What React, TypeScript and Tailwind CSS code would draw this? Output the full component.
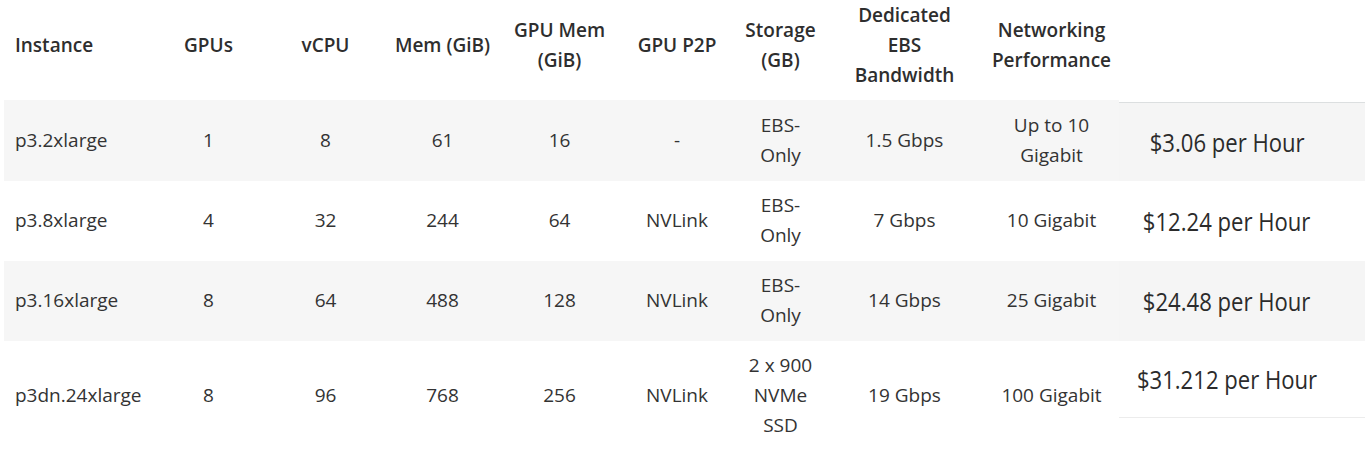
type Row = {
  instance: string;
  gpus: string;
  vcpu: string;
  mem: string;
  gpuMem: string;
  p2p: string;
  storage: string[];
  ebs: string;
  net: string[];
  price: string;
};

const ROWS: Row[] = [
  {
    instance: "p3.2xlarge",
    gpus: "1",
    vcpu: "8",
    mem: "61",
    gpuMem: "16",
    p2p: "-",
    storage: ["EBS-", "Only"],
    ebs: "1.5 Gbps",
    net: ["Up to 10", "Gigabit"],
    price: "$3.06 per Hour",
  },
  {
    instance: "p3.8xlarge",
    gpus: "4",
    vcpu: "32",
    mem: "244",
    gpuMem: "64",
    p2p: "NVLink",
    storage: ["EBS-", "Only"],
    ebs: "7 Gbps",
    net: ["10 Gigabit"],
    price: "$12.24 per Hour",
  },
  {
    instance: "p3.16xlarge",
    gpus: "8",
    vcpu: "64",
    mem: "488",
    gpuMem: "128",
    p2p: "NVLink",
    storage: ["EBS-", "Only"],
    ebs: "14 Gbps",
    net: ["25 Gigabit"],
    price: "$24.48 per Hour",
  },
  {
    instance: "p3dn.24xlarge",
    gpus: "8",
    vcpu: "96",
    mem: "768",
    gpuMem: "256",
    p2p: "NVLink",
    storage: ["2 x 900", "NVMe", "SSD"],
    ebs: "19 Gbps",
    net: ["100 Gigabit"],
    price: "$31.212 per Hour",
  },
];

const HEADERS: string[][] = [
  ["Instance"],
  ["GPUs"],
  ["vCPU"],
  ["Mem (GiB)"],
  ["GPU Mem", "(GiB)"],
  ["GPU P2P"],
  ["Storage", "(GB)"],
  ["Dedicated", "EBS", "Bandwidth"],
  ["Networking", "Performance"],
  [],
];

const WIDTHS = ["w-[146px]", "w-[117px]", "w-[117px]", "w-[117px]", "w-[117px]", "w-[118px]", "w-[89px]", "w-[159px]", "w-[135px]", "w-[246px]"];

function Lines({ lines }: { lines: string[] }) {
  return (
    <>
      {lines.map((l, i) => (
        <span key={i} className="block">
          {l}
        </span>
      ))}
    </>
  );
}

function PriceBox({ price, index }: { price: string; index: number }) {
  const grey = index % 2 === 0;
  return (
    <div
      className={
        "flex items-center justify-center pr-[30px] " +
        (grey ? "bg-[#f5f5f5] " : "bg-white ") +
        (index === 0 ? "mt-[2px] h-[79px] border-t border-[#dcdfe0] " : "") +
        (index === 1 || index === 2 ? "h-[80px] " : "") +
        (index === 3 ? "h-[77px] border-b border-[#ececec] " : "")
      }
    >
      <span className="inline-block origin-center scale-x-[0.85] whitespace-nowrap font-['Open_Sans',sans-serif] text-[26px] leading-none text-[#2b2b2b]">
        {price}
      </span>
    </div>
  );
}

export default function App() {
  return (
    <div className="h-[450px] w-[1365px] overflow-hidden bg-white font-['Open_Sans',sans-serif] text-[19px] text-[#333]">
      <table className="ml-[4px] w-[1361px] table-fixed border-collapse">
        <colgroup>
          {WIDTHS.map((w, i) => (
            <col key={i} className={w} />
          ))}
        </colgroup>
        <thead>
          <tr className="h-[100px]">
            {HEADERS.map((h, i) => (
              <th
                key={i}
                className={
                  "px-0 pt-0 pb-[10px] align-middle text-[19px] font-semibold leading-[30px] text-[#2e2e2e] " +
                  (i === 0 ? "pl-[11px] text-left" : "text-center")
                }
              >
                <Lines lines={h} />
              </th>
            ))}
          </tr>
        </thead>
        <tbody>
          {ROWS.map((r, i) => {
            const cells = [r.gpus, r.vcpu, r.mem, r.gpuMem, r.p2p];
            return (
              <tr key={r.instance} className={i % 2 === 0 ? "bg-[#f6f6f6]" : "bg-white"}>
                <td className="pt-[9px] pb-[11px] pl-[11px] text-left align-middle leading-[30px]">{r.instance}</td>
                {cells.map((c, j) => (
                  <td key={j} className="pt-[9px] pb-[11px] text-center align-middle leading-[30px]">
                    {c}
                  </td>
                ))}
                <td className="pt-[9px] pb-[11px] text-center align-middle leading-[30px]">
                  <Lines lines={r.storage} />
                </td>
                <td className="pt-[9px] pb-[11px] text-center align-middle leading-[30px]">{r.ebs}</td>
                <td className="pt-[9px] pb-[11px] text-center align-middle leading-[30px]">
                  <Lines lines={r.net} />
                </td>
                <td className="bg-white p-0 align-top">
                  <PriceBox price={r.price} index={i} />
                </td>
              </tr>
            );
          })}
        </tbody>
      </table>
    </div>
  );
}
